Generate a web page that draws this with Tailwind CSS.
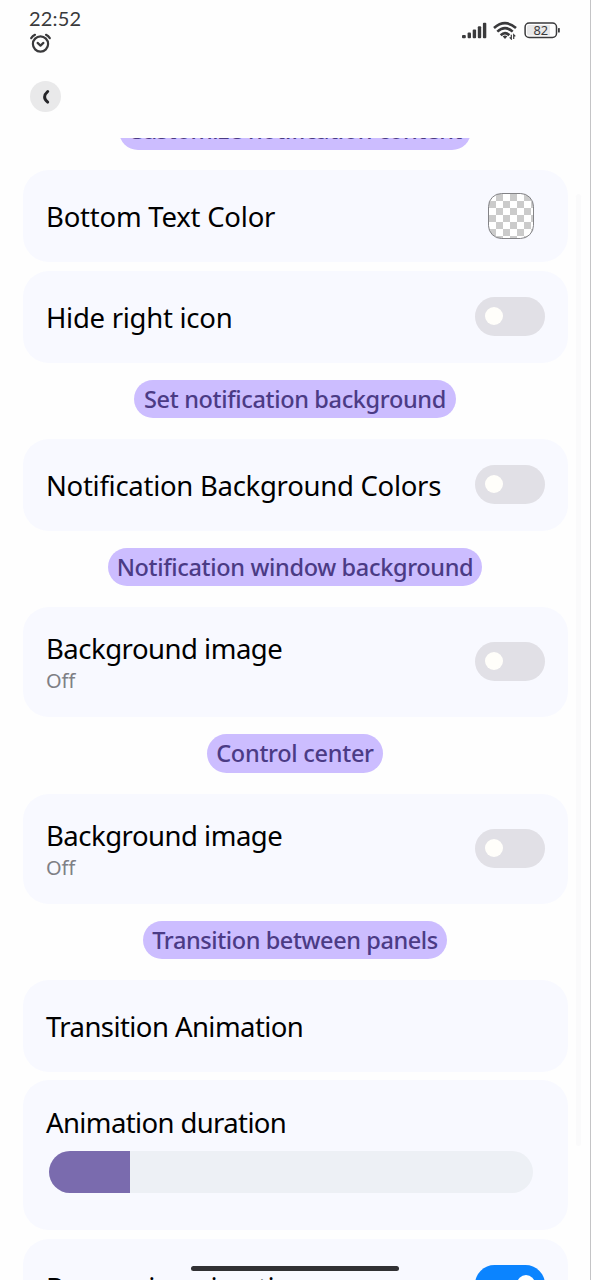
<!DOCTYPE html>
<html lang="en">
<head>
<meta charset="utf-8">
<title>Notification settings</title>
<script src="https://cdn.jsdelivr.net/npm/@tailwindcss/browser@4"></script>
</head>
<body class="bg-white font-['Noto_Sans',sans-serif] text-black">
<div class="relative flex h-[1280px] w-[591px] flex-col overflow-hidden border-r border-[#c4c4c6] bg-[#fefefe]">
  <header class="h-[138px] shrink-0">
    <div class="flex h-[60px] justify-between pt-[8px] pr-[29px] pl-[29px] text-[#3a3a3c]">
      <div class="flex flex-col">
        <span class="h-[22px] font-['Lato',sans-serif] text-[20px] leading-[21px] tracking-[.2px]">22:52</span>
        <svg class="mt-[2px] h-[22px] w-[23px]" viewBox="0 0 23 22" fill="none" stroke="currentColor" stroke-width="2.2" stroke-linecap="round" stroke-linejoin="round"><circle cx="11.5" cy="12" r="7.6"/><path d="M8.6 10.9l2.9 2.7 2.9-2.7M2.2 6.2Q3.6 4 6 2.8M20.8 6.2Q19.4 4 17 2.8"/></svg>
      </div>
      <div class="flex h-[20px] items-center pt-[22px]">
        <svg class="h-[17px] w-[25px]" viewBox="0 0 25 17" fill="currentColor"><rect x="0" y="13" width="3.8" height="3.2" rx="1"/><rect x="5.6" y="10.4" width="3.4" height="5.8" rx="1"/><rect x="10.7" y="7.6" width="3.4" height="8.6" rx="1"/><rect x="15.8" y="4.2" width="3.4" height="12" rx="1"/><rect x="20.9" y="0.8" width="3.4" height="15.4" rx="1"/></svg>
        <svg class="ml-[6px] h-[19px] w-[24px]" viewBox="0 0 24 19" fill="none" stroke="currentColor" stroke-width="2.6"><path d="M1 7Q12 -2.6 23 7M4.3 10.6Q12 3.8 19.7 10.6M7.7 14.2Q12 10 16.3 14.2"/><path d="M9.6 15.3Q12 13.8 14.4 15.3L12 18z" fill="currentColor" stroke="none"/><path d="M18.3 13.8v4.2l-1.6-1.6M20.7 18v-4.2l1.6 1.6" stroke-width="1.2"/></svg>
        <svg class="ml-[7px] h-[17px] w-[37px]" viewBox="0 0 37 17"><rect x="1.1" y="1.1" width="31.4" height="14.4" rx="4" fill="none" stroke="currentColor" stroke-width="1.5"/><path d="M5 3h21v10.600H5a2 2 0 0 1-2-2V5a2 2 0 0 1 2-2z" fill="#e8e8e9"/><rect x="34" y="6" width="1.8" height="4.6" rx=".6" fill="currentColor"/><text x="16.8" y="12.9" text-anchor="middle" font-family="Noto Sans" font-size="12.8" font-weight="400" fill="currentColor">82</text></svg>
      </div>
    </div>
    <div class="pt-[21px] pl-[30px]">
      <button class="flex size-[31px] items-center justify-center rounded-full bg-[#e9e9ea]"><svg class="h-[16px] w-[10px]" viewBox="0 0 10 16" fill="none" stroke="#252528" stroke-width="3" stroke-linecap="round"><path d="M6.7 2.5Q.5 8 6.7 13.1"/></svg></button>
    </div>
  </header>
  <main class="flex h-[1142px] shrink-0 flex-col overflow-hidden pr-[22px] pl-[23px]">
    <h2 class="-mt-[26px] mr-px flex h-[38px] w-[352px] shrink-0 items-center justify-center self-center rounded-full bg-[#ccbdff] pb-px text-[23.5px] font-medium tracking-[-.37px] whitespace-nowrap text-[#4b3b85]"><span>Customize notification content</span></h2>
    <section class="mt-[20px] flex h-[92px] shrink-0 items-center justify-between rounded-[26px] bg-[#f8f9ff] pr-[34px] pl-[23px]">
      <span class="pt-[2px] text-[27.5px] tracking-[-.22px]">Bottom Text Color</span>
      <svg class="size-[46px]" viewBox="0 0 46 46"><defs><pattern id="chk" x="1" y="1" width="14" height="14" patternUnits="userSpaceOnUse"><path fill="#fff" d="M0 0h14v14H0z"/><path fill="#cbcbcb" d="M7 0h7v7H7zM0 7h7v7H0z"/></pattern></defs><rect x=".5" y=".5" width="45" height="45" rx="13" fill="url(#chk)" stroke="#77777a" stroke-width=".9"/></svg>
    </section>
    <section class="mt-[9px] flex h-[92px] shrink-0 items-center justify-between rounded-[26px] bg-[#f8f9ff] px-[23px]">
      <span class="pt-[2px] text-[27.5px] tracking-[-.27px]">Hide right icon</span>
      <span class="mb-[2px] flex h-[39px] w-[70px] items-center rounded-full bg-[#e1e0e6] pl-[10px]"><i class="size-[18px] rounded-full bg-[#fffefa]"></i></span>
    </section>
    <h2 class="mt-[17px] mr-px flex h-[38px] w-[322px] shrink-0 items-center justify-center self-center rounded-full bg-[#ccbdff] pt-[2px] text-[23.5px] font-medium tracking-[-.35px] whitespace-nowrap text-[#4b3b85]"><span>Set notification background</span></h2>
    <section class="mt-[21px] flex h-[92px] shrink-0 items-center justify-between rounded-[26px] bg-[#f8f9ff] px-[23px]">
      <span class="pt-[2px] text-[27.5px] tracking-[-.28px]">Notification Background Colors</span>
      <span class="mb-[2px] flex h-[39px] w-[70px] shrink-0 items-center rounded-full bg-[#e1e0e6] pl-[10px]"><i class="size-[18px] rounded-full bg-[#fffefa]"></i></span>
    </section>
    <h2 class="mt-[17px] mr-px flex h-[38px] w-[374px] shrink-0 items-center justify-center self-center rounded-full bg-[#ccbdff] pt-[2px] text-[23.5px] font-medium tracking-[-.34px] whitespace-nowrap text-[#4b3b85]"><span>Notification window background</span></h2>
    <section class="mt-[21px] flex h-[110px] shrink-0 items-center justify-between rounded-[26px] bg-[#f8f9ff] px-[23px]">
      <div class="flex flex-col pt-[2px]"><span class="text-[27.5px] leading-[34px] tracking-[-.5px]">Background image</span><span class="pt-px text-[20px] leading-[28px] text-[#7f8085]">Off</span></div>
      <span class="mb-[2px] flex h-[39px] w-[70px] items-center rounded-full bg-[#e1e0e6] pl-[10px]"><i class="size-[18px] rounded-full bg-[#fffefa]"></i></span>
    </section>
    <h2 class="mt-[17px] mr-px flex h-[39px] w-[176px] shrink-0 items-center justify-center self-center rounded-full bg-[#ccbdff] pt-px text-[23.5px] font-medium tracking-[-.28px] whitespace-nowrap text-[#4b3b85]"><span>Control center</span></h2>
    <section class="mt-[21px] flex h-[110px] shrink-0 items-center justify-between rounded-[26px] bg-[#f8f9ff] px-[23px]">
      <div class="flex flex-col pt-[2px]"><span class="text-[27.5px] leading-[34px] tracking-[-.5px]">Background image</span><span class="pt-px text-[20px] leading-[28px] text-[#7f8085]">Off</span></div>
      <span class="mb-[2px] flex h-[39px] w-[70px] items-center rounded-full bg-[#e1e0e6] pl-[10px]"><i class="size-[18px] rounded-full bg-[#fffefa]"></i></span>
    </section>
    <h2 class="mt-[17px] mr-px flex h-[38px] w-[304px] shrink-0 items-center justify-center self-center rounded-full bg-[#ccbdff] pt-[2px] text-[23.5px] font-medium tracking-[-.41px] whitespace-nowrap text-[#4b3b85]"><span>Transition between panels</span></h2>
    <section class="mt-[21px] flex h-[92px] shrink-0 items-center rounded-[26px] bg-[#f8f9ff] px-[23px]">
      <span class="pt-[2px] text-[27.5px] tracking-[-.57px]">Transition Animation</span>
    </section>
    <section class="mt-[8px] flex h-[150px] shrink-0 flex-col items-start rounded-[26px] bg-[#f8f9ff] px-[23px] pt-[26px]">
      <span class="text-[27.5px] leading-[34px] tracking-[-.62px]">Animation duration</span>
      <div class="mt-[11px] ml-[3px] h-[42px] w-[484px] overflow-hidden rounded-full bg-[#edf0f5]"><div class="h-full w-[81px] bg-[#7a6bae]"></div></div>
    </section>
    <section class="mt-[9px] flex h-[92px] shrink-0 items-center justify-between rounded-[26px] bg-[#f8f9ff] px-[23px]">
      <span class="pt-[6px] text-[27.5px] tracking-[-.3px]">Bounce in animation</span>
      <span class="mb-[2px] flex h-[39px] w-[70px] items-center justify-end rounded-full bg-[#0b84ff] pr-[10px]"><i class="size-[18px] rounded-full bg-white"></i></span>
    </section>
  </main>
  <div class="absolute top-[194px] right-[9px] h-[952px] w-[5px] rounded-full bg-[#fafafb]"></div>
  <div class="absolute top-[1266px] left-[191px] h-[5px] w-[208px] rounded-full bg-[#313134]"></div>
</div>
</body>
</html>
